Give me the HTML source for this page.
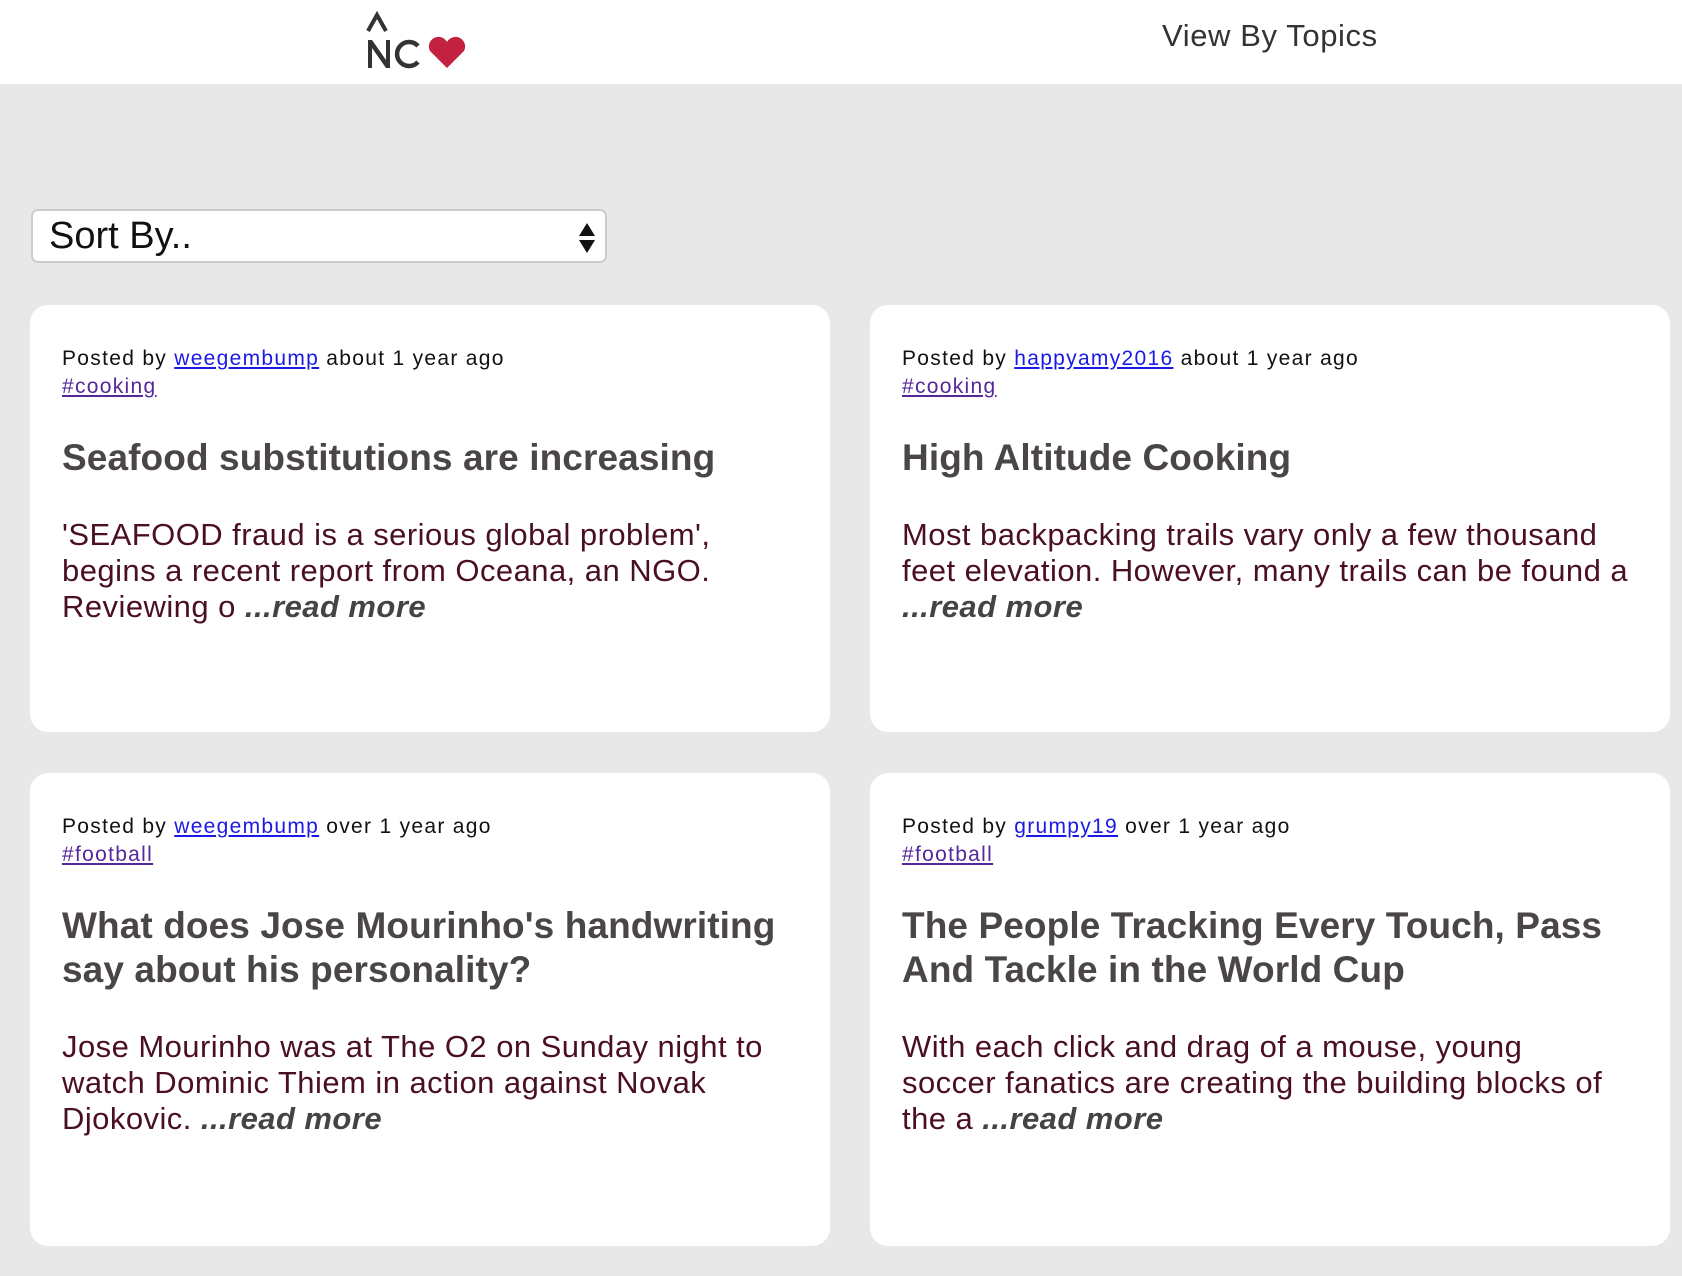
<!DOCTYPE html>
<html><head><meta charset="utf-8"><style>
*{margin:0;padding:0;box-sizing:border-box}
body{width:1682px;height:1276px;background:#e7e8e7;font-family:"Liberation Sans",sans-serif;position:relative;overflow:hidden}
.hdr{position:absolute;left:0;top:0;width:1682px;height:84px;background:#fff}
.topics{position:absolute;left:1162px;top:18px;font-size:31px;color:#333;letter-spacing:0.6px}
.sel{position:absolute;left:31px;top:209px;width:576px;height:54px;background:#fff;border:2px solid #ccc;border-radius:7px}
.sel span{position:absolute;left:16px;top:4px;font-size:38px;color:#111;letter-spacing:0px}
.card{position:absolute;width:800px;background:#fff;border-radius:18px;padding:40px 32px 0}
.meta{font-size:21px;line-height:28px;color:#111;white-space:nowrap;letter-spacing:1.3px}
.meta a{color:#1a1ae6;text-decoration:underline}
.tag{font-size:21px;line-height:28px;color:#55279a;text-decoration:underline;display:block;letter-spacing:1.3px}
h2{margin-top:35px;font-size:37px;line-height:44px;color:#4a4546;font-weight:bold;white-space:nowrap;letter-spacing:0.1px}
p{margin-top:37px;font-size:31px;line-height:36px;color:#4a1020;white-space:nowrap;letter-spacing:0.45px}
p i{font-weight:bold;color:#444}
</style></head><body>
<div class="hdr">
<svg style="position:absolute;left:364px;top:10px" width="108" height="62" viewBox="0 0 108 62">
<path d="M4 21 L13 5 L22 21" fill="none" stroke="#333" stroke-width="4"/>
<path d="M4 58 V30 H8 L22 50 V30 H26 V58 H22 L8 38 V58 Z" fill="#333"/>
<path d="M54 36 A12 12 0 1 0 54 52" fill="none" stroke="#333" stroke-width="4.5"/>
<path d="M83 58 L66 41 A9 9 0 0 1 83 32 A9 9 0 0 1 100 41 Z" fill="#c32140"/>
</svg>
<div class="topics">View By Topics</div>
</div>
<div class="sel"><span>Sort By..</span>
<svg style="position:absolute;right:8px;top:10px" width="20" height="34" viewBox="0 0 20 34"><path d="M10 2 L18 15 H2 Z M10 32 L18 19 H2 Z" fill="#111"/></svg></div>

<div class="card" style="left:30px;top:305px;height:427px">
<div class="meta">Posted by <a>weegembump</a> about 1 year ago</div>
<a class="tag">#cooking</a>
<h2>Seafood substitutions are increasing</h2>
<p>'SEAFOOD fraud is a serious global problem',<br>begins a recent report from Oceana, an NGO.<br>Reviewing o <i>...read more</i></p>
</div>
<div class="card" style="left:870px;top:305px;height:427px">
<div class="meta">Posted by <a>happyamy2016</a> about 1 year ago</div>
<a class="tag">#cooking</a>
<h2>High Altitude Cooking</h2>
<p>Most backpacking trails vary only a few thousand<br>feet elevation. However, many trails can be found a<br><i>...read more</i></p>
</div>
<div class="card" style="left:30px;top:773px;height:473px">
<div class="meta">Posted by <a>weegembump</a> over 1 year ago</div>
<a class="tag">#football</a>
<h2>What does Jose Mourinho's handwriting<br>say about his personality?</h2>
<p>Jose Mourinho was at The O2 on Sunday night to<br>watch Dominic Thiem in action against Novak<br>Djokovic. <i>...read more</i></p>
</div>
<div class="card" style="left:870px;top:773px;height:473px">
<div class="meta">Posted by <a>grumpy19</a> over 1 year ago</div>
<a class="tag">#football</a>
<h2>The People Tracking Every Touch, Pass<br>And Tackle in the World Cup</h2>
<p>With each click and drag of a mouse, young<br>soccer fanatics are creating the building blocks of<br>the a <i>...read more</i></p>
</div>
</body></html>
